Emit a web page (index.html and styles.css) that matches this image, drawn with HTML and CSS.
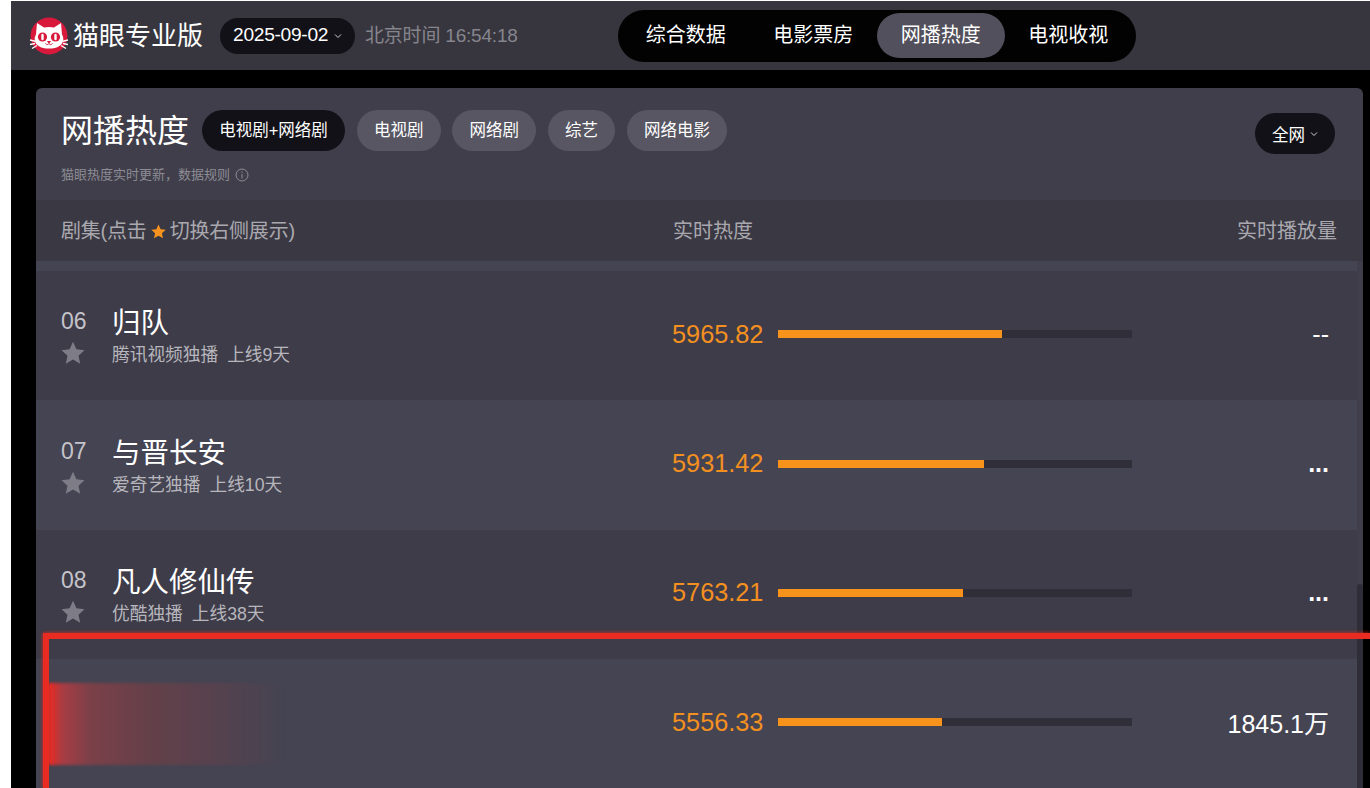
FILE: index.html
```html
<!DOCTYPE html>
<html lang="zh-CN">
<head>
<meta charset="utf-8">
<title>猫眼专业版 - 网播热度</title>
<link rel="stylesheet" href="styles.css">
</head>
<body>
<svg class="defs" width="0" height="0" aria-hidden="true">
  <defs>
    <symbol id="star" viewBox="0 0 24 24">
      <path d="M12 .8l3.4 7.5 8.1.9-6 5.5 1.7 8-7.2-4.1-7.2 4.1 1.7-8-6-5.5 8.1-.9z"/>
    </symbol>
    <symbol id="chev" viewBox="0 0 8 6">
      <path d="M1 1.5l3 3 3-3" fill="none" stroke="currentColor" stroke-width="1"/>
    </symbol>
  </defs>
</svg>
<div class="app">
  <header class="topbar">
    <div class="brand">
      <svg class="logo" viewBox="0 0 38 38" aria-hidden="true">
        <circle cx="19" cy="19" r="18.500" fill="#d8193c"/>
        <path d="M7 6l7 4.600c3.300-.9 6.700-.9 10 0L31 6l1 11.500c.9 1.500 1.300 3 1.300 4.700 0 5.800-5.800 9.300-14.300 9.300S4.700 28 4.700 22.200c0-1.700.4-3.200 1.300-4.700z" fill="#fff"/>
        <circle cx="12.500" cy="20" r="4.600" fill="#d8193c"/>
        <circle cx="25.500" cy="20" r="4.600" fill="#d8193c"/>
        <rect x="11.300" y="16.800" width="2.400" height="6.400" rx="1.200" fill="#fff"/>
        <rect x="24.300" y="16.800" width="2.400" height="6.400" rx="1.200" fill="#fff"/>
        <path d="M17.500 24.500h3L19 26.200zM15.500 26.500c1.500 1.500 2.800 1.300 3.500 0 .7 1.300 2 1.500 3.500 0" fill="none" stroke="#d8193c" stroke-width="1"/>
        <path d="M0 23l5 1.200M0 27.500l5-1M2 31.500l5-3M38 23l-5 1.200M38 27.500l-5-1M36 31.500l-5-3" stroke="#fff" stroke-width="1.400"/>
      </svg>
      <span class="brand-name">猫眼专业版</span>
    </div>
    <div class="date-pill"><span>2025-09-02</span><svg class="chev"><use href="#chev"/></svg></div>
    <div class="clock">北京时间 16:54:18</div>
    <nav class="nav">
      <a class="nav-item">综合数据</a>
      <a class="nav-item">电影票房</a>
      <a class="nav-item is-active">网播热度</a>
      <a class="nav-item">电视收视</a>
    </nav>
  </header>

  <main class="main">
    <section class="panel">
      <div class="panel-head">
        <div class="head-row">
          <h1 class="title">网播热度</h1>
          <div class="tabs">
            <span class="tab is-active">电视剧+网络剧</span>
            <span class="tab">电视剧</span>
            <span class="tab">网络剧</span>
            <span class="tab">综艺</span>
            <span class="tab">网络电影</span>
          </div>
          <div class="scope"><span>全网</span><svg class="chev"><use href="#chev"/></svg></div>
        </div>
        <p class="note">猫眼热度实时更新，数据规则
          <svg class="info" viewBox="0 0 14 14" aria-hidden="true"><circle cx="7" cy="7" r="6" fill="none" stroke="currentColor"/><path d="M7 6v4.500M7 3.500v1.300" stroke="currentColor"/></svg>
        </p>
      </div>

      <div class="thead">
        <div class="th-name">剧集(点击<svg class="th-star"><use href="#star"/></svg>切换右侧展示)</div>
        <div class="th-heat">实时热度</div>
        <div class="th-play">实时播放量</div>
      </div>

      <div class="list">
        <div class="row-sliver"></div>

        <div class="row">
          <div class="rank"><span class="num">06</span><svg class="star"><use href="#star"/></svg></div>
          <div class="info-col"><div class="name">归队</div><div class="meta"><span>腾讯视频独播</span><span>上线9天</span></div></div>
          <div class="heat">5965.82</div>
          <div class="track"><div class="fill" style="width:224px"></div></div>
          <div class="plays">--</div>
        </div>

        <div class="row row-alt">
          <div class="rank"><span class="num">07</span><svg class="star"><use href="#star"/></svg></div>
          <div class="info-col"><div class="name">与晋长安</div><div class="meta"><span>爱奇艺独播</span><span>上线10天</span></div></div>
          <div class="heat">5931.42</div>
          <div class="track"><div class="fill" style="width:206px"></div></div>
          <div class="plays plays-dots">...</div>
        </div>

        <div class="row">
          <div class="rank"><span class="num">08</span><svg class="star"><use href="#star"/></svg></div>
          <div class="info-col"><div class="name">凡人修仙传</div><div class="meta"><span>优酷独播</span><span>上线38天</span></div></div>
          <div class="heat">5763.21</div>
          <div class="track"><div class="fill" style="width:185px"></div></div>
          <div class="plays plays-dots">...</div>
        </div>

        <div class="row row-alt">
          <div class="rank"></div>
          <div class="info-col"></div>
          <div class="heat">5556.33</div>
          <div class="track"><div class="fill" style="width:164px"></div></div>
          <div class="plays">1845.1万</div>
        </div>
      </div>

      <div class="scrollbar"><div class="thumb"></div></div>
    </section>
  </main>
</div>

<div class="smear"></div>
<div class="red-frame"></div>
</body>
</html>
```
FILE: styles.css
```css
* { box-sizing: border-box; }

html, body {
  margin: 0;
  height: 788px;
  overflow: hidden;
}

body {
  position: relative;
  background: #fff;
  padding: 1px 0 0 11px;
  font-family: "Liberation Sans", "Noto Sans CJK SC", sans-serif;
  color: #fff;
}

.defs { position: absolute; }

.app {
  display: flex;
  flex-direction: column;
  height: 787px;
  background: #000;
}

/* top bar */
.topbar {
  display: flex;
  align-items: center;
  flex: none;
  height: 69px;
  padding-left: 19px;
  background: #37363e;
}

.brand { display: flex; align-items: center; }
.logo { width: 38px; height: 38px; margin-right: 5px; }
.brand-name { font-size: 26px; line-height: 38px; white-space: nowrap; }

.date-pill {
  display: flex;
  align-items: center;
  flex: none;
  width: 135px;
  height: 36px;
  margin-left: 17px;
  padding-left: 13px;
  border-radius: 18px;
  background: #121117;
  font-size: 19.200px;
  letter-spacing: -0.300px;
}

.date-pill span { padding-bottom: 2px; }

.chev { width: 8px; height: 6px; margin-left: 6px; color: #d0d0d4; }

.clock {
  flex: none;
  width: 152px;
  margin-left: 10px;
  padding-bottom: 4px;
  font-size: 19px;
  letter-spacing: -0.200px;
  color: #86858d;
  white-space: nowrap;
}

.nav {
  display: flex;
  align-items: center;
  height: 52px;
  margin-left: 101px;
  padding: 0 4px;
  border-radius: 26px;
  background: #020203;
}

.nav-item {
  width: 127.500px;
  height: 45px;
  border-radius: 23px;
  font-size: 20px;
  line-height: 44px;
  text-align: center;
}
.nav-item.is-active { background: #52505c; }

/* main */
.main {
  flex: 1;
  min-height: 0;
  padding: 18px 7px 0 25px;
}

.panel {
  position: relative;
  height: 100%;
  overflow: hidden;
  border-radius: 6px 6px 0 0;
  background: #403e4a;
}

.panel-head {
  height: 112px;
  padding: 22px 28px 0 25px;
}

.head-row { display: flex; align-items: flex-start; }

.title {
  margin: 0;
  font-size: 32px;
  font-weight: 400;
  line-height: 43px;
}

.tabs { display: flex; gap: 11.700px; margin-left: 13px; }

.tab {
  height: 41px;
  padding: 0 17.200px;
  border-radius: 21px;
  background: #575662;
  font-size: 16.500px;
  line-height: 40px;
  white-space: nowrap;
}
.tab.is-active { background: #121117; }

.scope {
  display: flex;
  align-items: center;
  height: 41px;
  margin: 3px 0 0 auto;
  padding: 0 17px;
  border-radius: 21px;
  background: #121117;
  font-size: 16.500px;
}
.scope .chev { margin-left: 5px; }

.note {
  display: flex;
  align-items: center;
  margin: 12px 0 0;
  font-size: 13px;
  line-height: 18px;
  color: #8d8c95;
}
.info { width: 14px; height: 14px; margin-left: 5px; }

.thead {
  display: flex;
  align-items: center;
  height: 61px;
  padding: 0 26px 2px 25px;
  background: #3a3843;
  font-size: 20px;
  color: #a9a8ae;
}

.th-name {
  display: flex;
  align-items: center;
  width: 612px;
  letter-spacing: -0.200px;
  white-space: nowrap;
}
.th-star { width: 15px; height: 15px; margin: 3px 4px 0 4px; fill: #f7931e; }
.th-heat { flex: 1; }
.th-play { white-space: nowrap; }

.list { margin-right: 6px; }

.row-sliver { height: 10px; background: #454452; }

.row {
  display: flex;
  align-items: center;
  height: 129.400px;
  background: #3e3c49;
}
.row-alt { background: #454452; }

.rank {
  display: flex;
  flex-direction: column;
  flex: none;
  width: 76px;
  margin-top: 2px;
  padding-left: 25px;
}

.num {
  font-size: 23px;
  line-height: 26px;
  color: #c4c3c9;
}

.star {
  width: 24px;
  height: 24px;
  margin-top: 7px;
  fill: #7d7c87;
}

.info-col { flex: none; width: 560px; margin-top: 1px; }

.name { font-size: 28.500px; line-height: 39px; white-space: nowrap; }

.meta {
  display: flex;
  gap: 9px;
  margin-top: -1px;
  font-size: 17.700px;
  line-height: 26px;
  color: #b7b6bc;
  white-space: nowrap;
}

.heat {
  flex: none;
  width: 106px;
  padding-bottom: 3px;
  font-size: 25.300px;
  color: #f39020;
}

.track {
  flex: none;
  width: 354px;
  height: 8px;
  margin-top: -3px;
  background: #302f39;
}
.fill { height: 100%; background: #f7931a; }

.plays {
  flex: 1;
  padding: 0 28px 3px 0;
  font-size: 25px;
  text-align: right;
  white-space: nowrap;
}
.plays-dots { font-weight: 700; }

.scrollbar {
  position: absolute;
  top: 173px;
  right: 0;
  bottom: 0;
  width: 6px;
  background: #403e4a;
}
.thumb {
  position: absolute;
  top: 323px;
  right: 0;
  bottom: 0;
  width: 6px;
  border-radius: 3px 3px 0 0;
  background: #2f2e38;
}

/* annotations drawn over the screenshot */
.red-frame {
  position: absolute;
  left: 42.500px;
  top: 633px;
  right: 0;
  bottom: 0;
  border: solid #e82c22;
  border-width: 6px 0 0 6px;
  box-shadow: 0 -1px 3px rgba(232, 44, 34, .4), -1px 0 3px rgba(232, 44, 34, .4);
}

.smear {
  position: absolute;
  left: 48px;
  top: 683px;
  width: 236px;
  height: 82px;
  background: linear-gradient(90deg, #f2281e 0, #a83c44 6%, #7b4048 18%, #624049 45%, #54424f 75%, rgba(69, 68, 82, 0) 100%);
  filter: blur(1.500px);
}
```
